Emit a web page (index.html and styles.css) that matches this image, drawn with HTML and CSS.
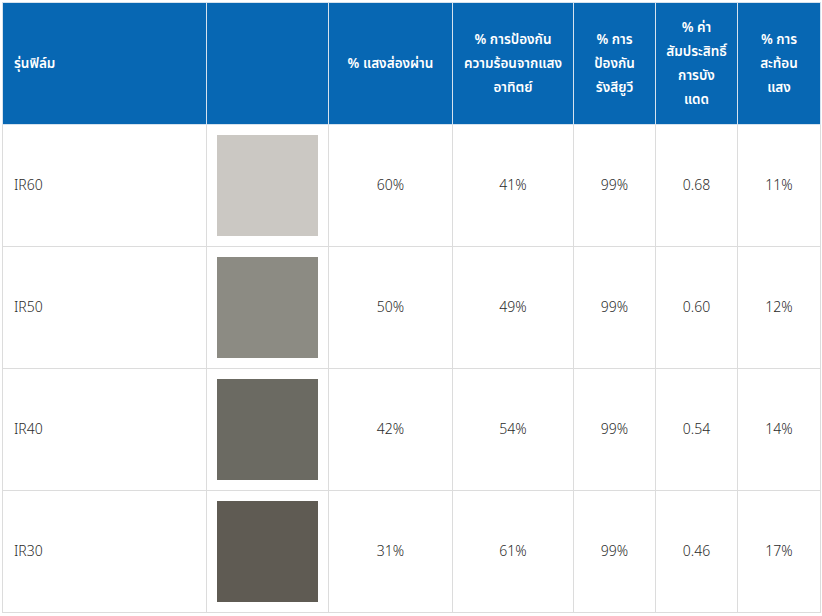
FILE: index.html
```html
<!DOCTYPE html>
<html lang="th">
<head>
<meta charset="utf-8">
<title>ฟิล์ม</title>
<link rel="stylesheet" href="styles.css">
</head>
<body>
<table class="film-table">
  <colgroup>
    <col class="c-model"><col class="c-swatch"><col class="c-light"><col class="c-heat"><col class="c-uv"><col class="c-coef"><col class="c-reflect">
  </colgroup>
  <thead>
    <tr>
      <th class="left">รุ่นฟิล์ม</th>
      <th></th>
      <th>% แสงส่องผ่าน</th>
      <th>% การป้องกัน<br>ความร้อนจากแสง<br>อาทิตย์</th>
      <th>% การ<br>ป้องกัน<br>รังสียูวี</th>
      <th>% ค่า<br>สัมประสิทธิ์<br>การบัง<br>แดด</th>
      <th>% การ<br>สะท้อน<br>แสง</th>
    </tr>
  </thead>
  <tbody>
    <tr>
      <td class="left">IR60</td>
      <td class="sw"><div class="swatch s60"></div></td>
      <td>60%</td><td>41%</td><td>99%</td><td>0.68</td><td>11%</td>
    </tr>
    <tr>
      <td class="left">IR50</td>
      <td class="sw"><div class="swatch s50"></div></td>
      <td>50%</td><td>49%</td><td>99%</td><td>0.60</td><td>12%</td>
    </tr>
    <tr>
      <td class="left">IR40</td>
      <td class="sw"><div class="swatch s40"></div></td>
      <td>42%</td><td>54%</td><td>99%</td><td>0.54</td><td>14%</td>
    </tr>
    <tr>
      <td class="left">IR30</td>
      <td class="sw"><div class="swatch s30"></div></td>
      <td>31%</td><td>61%</td><td>99%</td><td>0.46</td><td>17%</td>
    </tr>
  </tbody>
</table>
</body>
</html>
```

FILE: styles.css
```css
html, body {
  margin: 0;
  padding: 0;
  background: #ffffff;
}
body {
  padding: 2px 0 0 2px;
  font-family: "Noto Sans Thai", "Noto Sans", "Liberation Sans", sans-serif;
  color: #2a2a2a;
}
.film-table {
  border-collapse: collapse;
  table-layout: fixed;
  width: 818px;
}
.c-model { width: 204px; }
.c-swatch { width: 122px; }
.c-light { width: 124px; }
.c-heat { width: 121px; }
.c-uv { width: 82px; }
.c-coef { width: 82px; }
.c-reflect { width: 83px; }

.film-table th {
  background: #0767b3;
  color: #ffffff;
  font-weight: 600;
  font-size: 13.5px;
  line-height: 24px;
  height: 121px;
  padding: 0 4px;
  text-align: center;
  vertical-align: middle;
  border: 1px solid #d5e2ee;
}
.film-table td {
  font-size: 14px;
  font-weight: 300;
  line-height: 18px;
  height: 121px;
  padding: 0 4px;
  text-align: center;
  vertical-align: middle;
  border: 1px solid #dcdcdc;
}
.film-table .left {
  text-align: left;
  padding-left: 11px;
}
.film-table td.sw {
  padding: 0 10px;
}
.swatch {
  width: 101px;
  height: 101px;
}
.s60 { background: #cbc8c3; }
.s50 { background: #8c8b83; }
.s40 { background: #6b6a62; }
.s30 { background: #5f5b53; }
```
